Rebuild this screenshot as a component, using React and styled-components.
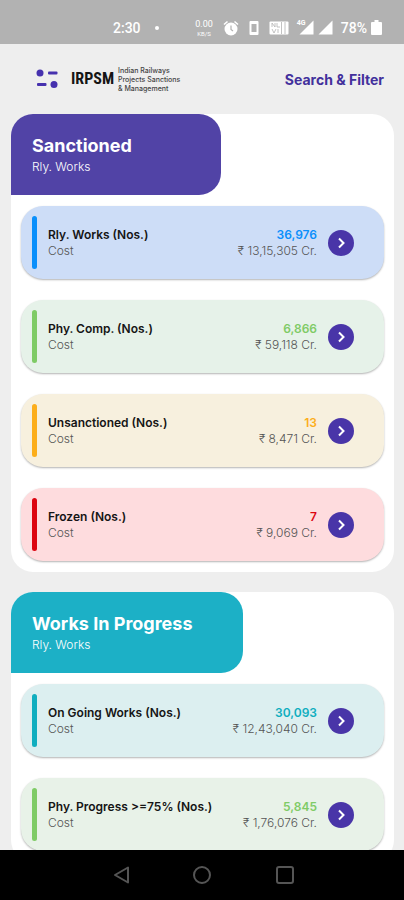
import React from "react";
import styled, { createGlobalStyle } from "styled-components";

const GlobalStyle = createGlobalStyle`
  * {
    box-sizing: border-box;
  }

  body {
    margin: 0;
    background: #eeeeee;
    font-family: Inter, "Open Sans", sans-serif;
  }
`;

const Screen = styled.div`
  display: flex;
  flex-direction: column;
  height: 100vh;
  overflow: hidden;
  background: #eeeeee;
`;

const StatusBar = styled.div`
  display: flex;
  flex-shrink: 0;
  align-items: center;
  justify-content: space-between;
  height: 44px;
  padding: 11px 22px 0 113px;
  background: #b2b2b2;
  color: white;
  font-family: Roboto, sans-serif;
  font-size: 14px;
  font-weight: 500;
`;

const StatusGroup = styled.div`
  display: flex;
  align-items: center;
  gap: ${(props) => props.$gap}px;
`;

const Dot = styled.span`
  width: 4px;
  height: 4px;
  border-radius: 50%;
  background: white;
`;

const Speed = styled.div`
  display: flex;
  flex-direction: column;
  align-items: center;
  font-size: 9px;
  line-height: 11px;
  font-weight: 400;

  small {
    font-size: 6px;
    line-height: 7px;
  }
`;

const Signal = styled.div`
  position: relative;
  display: flex;
`;

const NetworkBadge = styled.span`
  position: absolute;
  top: 0;
  left: -2px;
  font-size: 7px;
  line-height: 7px;
  font-weight: 700;
`;

const AppHeader = styled.header`
  display: flex;
  flex-shrink: 0;
  align-items: center;
  justify-content: space-between;
  height: 70px;
  padding: 0 20px 0 36px;
`;

const Brand = styled.div`
  display: flex;
  align-items: center;
`;

const MenuButton = styled.button`
  display: flex;
  margin-right: 12px;
  padding: 0;
  border: none;
  background: none;
  cursor: pointer;
`;

const LogoName = styled.span`
  margin-right: 4px;
  color: #151515;
  font-family: "Liberation Sans Narrow", "Roboto Condensed", Roboto, sans-serif;
  font-size: 16px;
  line-height: 28px;
  font-weight: 700;
`;

const LogoText = styled.span`
  color: #444444;
  font-size: 7px;
  line-height: 9px;
  font-weight: 500;
  white-space: nowrap;
`;

const FilterButton = styled.button`
  padding: 0;
  border: none;
  background: none;
  color: #42309c;
  font-family: inherit;
  font-size: 14px;
  font-weight: 700;
  cursor: pointer;
`;

const Content = styled.main`
  display: flex;
  flex: 1;
  flex-direction: column;
  gap: 20px;
  min-height: 0;
  padding: 0 10px 0 11px;
  overflow: hidden;
`;

const Panel = styled.section`
  flex-shrink: 0;
  padding-bottom: 11px;
  border-radius: 22px;
  background: white;
`;

const PanelTab = styled.div`
  width: ${(props) => props.$width};
  height: 81px;
  padding: 20px 21px;
  border-radius: 22px 22px 22px 0;
  background: ${(props) => props.$color};
  color: white;
`;

const PanelTitle = styled.h2`
  margin: 0 0 1px;
  font-size: 18px;
  line-height: 24px;
  font-weight: 700;
`;

const PanelSubtitle = styled.p`
  margin: 0;
  font-size: 12px;
  line-height: 16px;
  font-weight: 300;
`;

const CardList = styled.div`
  display: flex;
  flex-direction: column;
  gap: 21px;
  padding: 11px 10px 0;
`;

const Card = styled.article`
  display: flex;
  align-items: center;
  height: 73px;
  padding: 0 30px 0 11px;
  border-radius: 22px;
  background: ${(props) => props.$background};
  box-shadow: 0 1px 2px rgba(0, 0, 0, 0.3);
`;

const Stripe = styled.span`
  width: 5px;
  height: 53px;
  margin-right: 11px;
  border-radius: 3px;
  background: ${(props) => props.$color};
`;

const CardText = styled.div`
  flex: ${(props) => (props.$grow ? 1 : "none")};
  text-align: ${(props) => props.$align || "left"};
  white-space: nowrap;
`;

const Label = styled.div`
  color: ${(props) => props.$color || "#151515"};
  font-size: 12px;
  line-height: 16px;
  font-weight: 600;
`;

const Cost = styled.div`
  color: #555555;
  font-size: 12px;
  line-height: 16px;
  font-weight: 300;
`;

const OpenButton = styled.button`
  display: flex;
  align-items: center;
  justify-content: center;
  width: 26px;
  height: 26px;
  margin-left: 11px;
  padding: 0;
  border: none;
  border-radius: 50%;
  background: #4935a8;
  cursor: pointer;
`;

const NavBar = styled.nav`
  display: flex;
  flex-shrink: 0;
  align-items: center;
  justify-content: center;
  gap: 62px;
  height: 50px;
  background: black;
`;

const NavButton = styled.button`
  display: flex;
  padding: 0;
  border: none;
  background: none;
  cursor: pointer;
`;

const sections = [
  {
    title: "Sanctioned",
    color: "#5143a6",
    width: "210px",
    cards: [
      { label: "Rly. Works (Nos.)", count: "36,976", cost: "13,15,305", color: "#0a8ffb", background: "#cdddf7" },
      { label: "Phy. Comp. (Nos.)", count: "6,866", cost: "59,118", color: "#7fcb66", background: "#e6f2e9" },
      { label: "Unsanctioned (Nos.)", count: "13", cost: "8,471", color: "#fcae1b", background: "#f7f0de" },
      { label: "Frozen (Nos.)", count: "7", cost: "9,069", color: "#dc0510", background: "#fedcde" },
    ],
  },
  {
    title: "Works In Progress",
    color: "#1cb0c6",
    width: "232px",
    cards: [
      { label: "On Going Works (Nos.)", count: "30,093", cost: "12,43,040", color: "#10aebf", background: "#dceff0" },
      { label: "Phy. Progress >=75% (Nos.)", count: "5,845", cost: "1,76,076", color: "#7fcb66", background: "#e8f2e8" },
    ],
  },
];

const StatusIcons = () => (
  <>
    <svg width="16" height="16" viewBox="0 0 16 16" fill="none" stroke="white">
      <circle cx="8" cy="9" r="6.500" fill="white" stroke="none" />
      <path d="M1 4.500 4.500 1.500M15 4.500 11.500 1.500" strokeWidth="1.600" />
      <path d="M8 5.500v4l2 1.500" stroke="#b2b2b2" strokeWidth="1.200" />
    </svg>
    <svg width="10" height="16" viewBox="0 0 10 16">
      <rect x="0.500" y="1" width="9" height="14" rx="1" fill="white" />
      <rect x="2.500" y="4" width="5" height="8" fill="#b2b2b2" />
    </svg>
    <svg width="20" height="16" viewBox="0 0 20 16">
      <rect x="0.500" y="1.500" width="19" height="13" rx="1" fill="white" />
      <path d="M3 7V3l3 4V3M8 3v4h3M3 9l2 4 2-4M9 9v4M12.500 2v12M16 2v12" stroke="#b2b2b2" strokeWidth="0.800" fill="none" />
    </svg>
  </>
);

const SignalIcon = () => (
  <svg width="15" height="15" viewBox="0 0 15 15">
    <path d="M14.500 0.500v14H0.500z" fill="white" />
  </svg>
);

const MenuIcon = () => (
  <svg width="23" height="20" viewBox="0 0 23 20" fill="#4631ae">
    <circle cx="4" cy="4" r="3.500" />
    <rect x="12" y="2.500" width="9.500" height="3" rx="1" />
    <rect x="1" y="14" width="9.500" height="3" rx="1" />
    <circle cx="18" cy="15.500" r="3.500" />
  </svg>
);

const WorkCard = ({ label, count, cost, color, background }) => (
  <Card $background={background}>
    <Stripe $color={color} />
    <CardText $grow>
      <Label>{label}</Label>
      <Cost>Cost</Cost>
    </CardText>
    <CardText $align="right">
      <Label $color={color}>{count}</Label>
      <Cost>₹ {cost} Cr.</Cost>
    </CardText>
    <OpenButton aria-label={label}>
      <svg width="14" height="14" viewBox="0 0 14 14" fill="none" stroke="white" strokeWidth="2">
        <path d="M5 2.500 9.500 7 5 11.500" />
      </svg>
    </OpenButton>
  </Card>
);

const App = () => {
  return (
    <>
      <GlobalStyle />
      <Screen>
        <StatusBar>
          <StatusGroup $gap={14}>
            <span>2:30</span>
            <Dot />
          </StatusGroup>
          <StatusGroup $gap={8}>
            <StatusGroup $gap={10}>
              <Speed>
                0.00
                <small>KB/S</small>
              </Speed>
              <StatusIcons />
              <StatusGroup $gap={4}>
                <Signal>
                  <SignalIcon />
                  <NetworkBadge>4G</NetworkBadge>
                </Signal>
                <SignalIcon />
              </StatusGroup>
            </StatusGroup>
            <StatusGroup $gap={4}>
              <span>78%</span>
              <svg width="11" height="15" viewBox="0 0 11 15" fill="white">
                <path d="M3.500 0h4v2H10a1 1 0 0 1 1 1v11a1 1 0 0 1-1 1H1a1 1 0 0 1-1-1V3a1 1 0 0 1 1-1h2.500z" />
              </svg>
            </StatusGroup>
          </StatusGroup>
        </StatusBar>
        <AppHeader>
          <Brand>
            <MenuButton aria-label="Menu">
              <MenuIcon />
            </MenuButton>
            <LogoName>IRPSM</LogoName>
            <LogoText>
              Indian Railways
              <br />
              Projects Sanctions
              <br />& Management
            </LogoText>
          </Brand>
          <FilterButton>Search &amp; Filter</FilterButton>
        </AppHeader>
        <Content>
          {sections.map((section) => (
            <Panel key={section.title}>
              <PanelTab $color={section.color} $width={section.width}>
                <PanelTitle>{section.title}</PanelTitle>
                <PanelSubtitle>Rly. Works</PanelSubtitle>
              </PanelTab>
              <CardList>
                {section.cards.map((card) => (
                  <WorkCard key={card.label} {...card} />
                ))}
              </CardList>
            </Panel>
          ))}
        </Content>
        <NavBar>
          <NavButton aria-label="Back">
            <svg width="20" height="20" viewBox="0 0 20 20" fill="none" stroke="#555555" strokeWidth="2">
              <path d="M18 2.500v15L5 10z" strokeLinejoin="round" />
            </svg>
          </NavButton>
          <NavButton aria-label="Home">
            <svg width="20" height="20" viewBox="0 0 20 20" fill="none" stroke="#555555" strokeWidth="2">
              <circle cx="10" cy="10" r="8" />
            </svg>
          </NavButton>
          <NavButton aria-label="Recent apps">
            <svg width="20" height="20" viewBox="0 0 20 20" fill="none" stroke="#555555" strokeWidth="2">
              <rect x="3" y="2" width="16" height="16" rx="2" />
            </svg>
          </NavButton>
        </NavBar>
      </Screen>
    </>
  );
};

export default App;
